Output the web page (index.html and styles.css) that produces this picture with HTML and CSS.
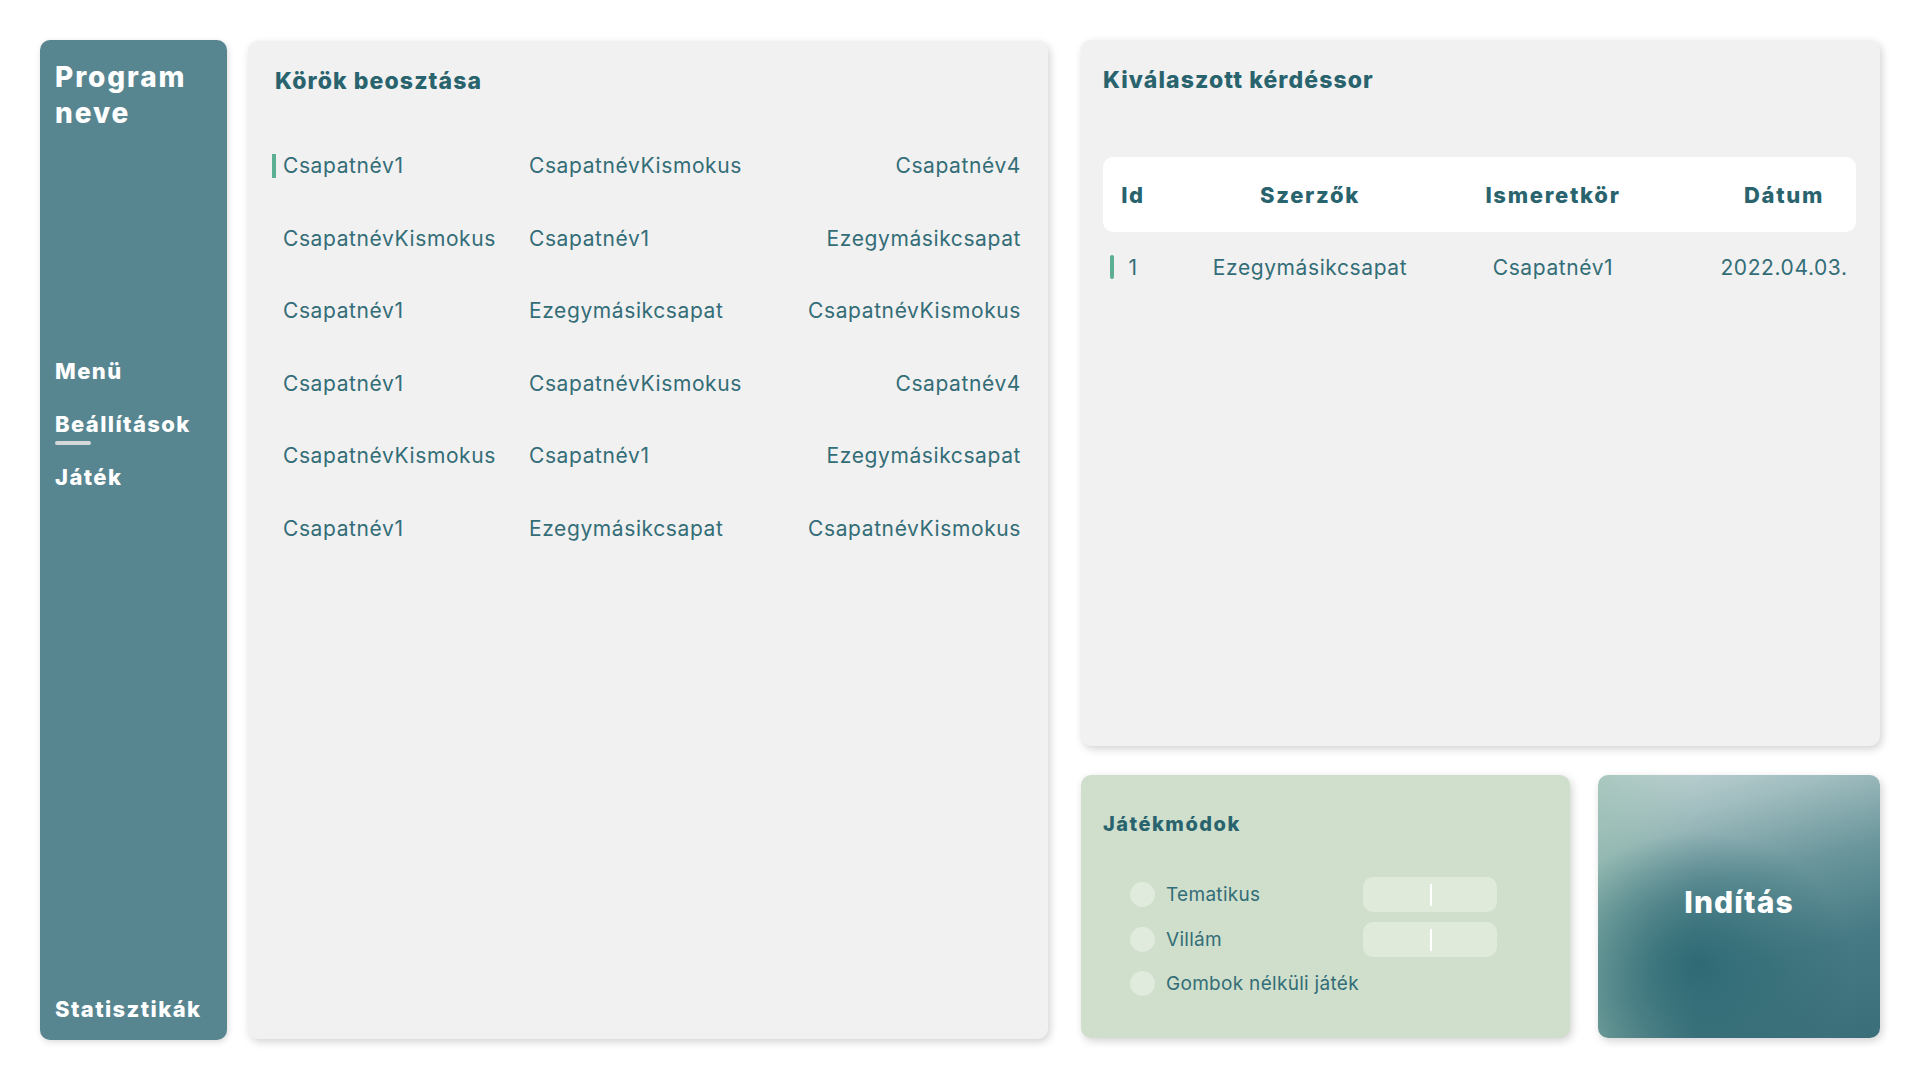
FILE: index.html
```html
<!DOCTYPE html>
<html lang="hu">
<head>
<meta charset="utf-8">
<title>Program neve</title>
<link rel="stylesheet" href="styles.css">
</head>
<body>
<div class="page">
  <aside class="sidebar">
    <div class="brand">Program<br>neve</div>
    <nav class="nav">
      <a class="nav-item">Menü</a>
      <a class="nav-item active">Beállítások</a>
      <a class="nav-item">Játék</a>
    </nav>
    <a class="nav-item stats">Statisztikák</a>
  </aside>

  <section class="panel rounds">
    <h2 class="panel-title">Körök beosztása</h2>
    <div class="round-grid">
      <div class="c1 sel">Csapatnév1</div><div class="c2">CsapatnévKismokus</div><div class="c3">Csapatnév4</div>
      <div class="c1">CsapatnévKismokus</div><div class="c2">Csapatnév1</div><div class="c3">Ezegymásikcsapat</div>
      <div class="c1">Csapatnév1</div><div class="c2">Ezegymásikcsapat</div><div class="c3">CsapatnévKismokus</div>
      <div class="c1">Csapatnév1</div><div class="c2">CsapatnévKismokus</div><div class="c3">Csapatnév4</div>
      <div class="c1">CsapatnévKismokus</div><div class="c2">Csapatnév1</div><div class="c3">Ezegymásikcsapat</div>
      <div class="c1">Csapatnév1</div><div class="c2">Ezegymásikcsapat</div><div class="c3">CsapatnévKismokus</div>
    </div>
  </section>

  <div class="right-col">
    <section class="panel questions">
      <h2 class="panel-title">Kiválaszott kérdéssor</h2>
      <div class="table">
        <div class="thead trow">
          <div class="td">Id</div><div class="td">Szerzők</div><div class="td">Ismeretkör</div><div class="td date">Dátum</div>
        </div>
        <div class="tbody trow">
          <div class="td id"><span class="bar"></span>1</div><div class="td">Ezegymásikcsapat</div><div class="td">Csapatnév1</div><div class="td date">2022.04.03.</div>
        </div>
      </div>
    </section>

    <div class="bottom-row">
      <section class="modes">
        <h3 class="modes-title">Játékmódok</h3>
        <div class="options">
          <div class="opt"><span class="radio"></span><span class="lbl">Tematikus</span><span class="field"><span class="caret"></span></span></div>
          <div class="opt"><span class="radio"></span><span class="lbl">Villám</span><span class="field"><span class="caret"></span></span></div>
          <div class="opt"><span class="radio"></span><span class="lbl">Gombok nélküli játék</span></div>
        </div>
      </section>
      <button class="start">Indítás</button>
    </div>
  </div>
</div>
</body>
</html>
```
FILE: styles.css
```css
* { box-sizing: border-box; }
html, body { margin: 0; padding: 0; background: #ffffff; }
body {
  font-family: Inter, "Noto Sans", "DejaVu Sans", sans-serif;
  color: #2d6871;
}
.page {
  display: flex;
  padding: 40px;
  height: 1080px;
}
.sidebar {
  width: 187px;
  height: 1000px;
  background: #578691;
  border-radius: 10px;
  box-shadow: 1px 2px 6px rgba(0,0,0,0.15);
  padding: 19px 10px 17px 15px;
  display: flex;
  flex-direction: column;
  color: #fff;
}
.brand {
  font-size: 28px;
  font-weight: 800;
  line-height: 36px;
  letter-spacing: 1.9px;
}
.nav {
  margin-top: 226px;
  display: flex;
  flex-direction: column;
  gap: 25px;
}
.nav-item {
  font-size: 22px;
  font-weight: 800;
  line-height: 28px;
  color: #fff;
  letter-spacing: 1.4px;
  white-space: nowrap;
}
.nav-item.active { position: relative; }
.nav-item.active::after {
  content: "";
  position: absolute;
  left: 0;
  top: 31px;
  width: 36px;
  height: 4px;
  border-radius: 2px;
  background: #d4d8d9;
}
.stats { margin-top: auto; }

.panel {
  background: #f1f1f1;
  border-radius: 10px;
  box-shadow: 2px 3px 8px rgba(0,0,0,0.18);
}
.rounds {
  width: 800px;
  margin-left: 21px;
  height: 998px;
  margin-top: 1px;
  padding: 25px 27px 0 24px;
}
.panel-title {
  margin: 0;
  font-size: 23px;
  font-weight: 800;
  line-height: 30px;
  letter-spacing: 1.1px;
  color: #29646e;
  padding-left: 3px;
}
.round-grid {
  margin-top: 58px;
  display: grid;
  grid-template-columns: 257px 1fr auto;
  row-gap: 48.6px;
  font-size: 21px;
  letter-spacing: 0.6px;
  line-height: 24px;
  color: #336d77;
}
.c1 { padding-left: 11px; }
.c1.sel { border-left: 4px solid #5caf92; padding-left: 7px; }
.c3 { justify-self: end; }

.right-col {
  margin-left: 33px;
  flex: 1;
  display: flex;
  flex-direction: column;
  gap: 29px;
}
.questions {
  height: 706px;
  padding: 25px 24px 0 22px;
}
.questions .panel-title { padding-left: 0; }
.table { margin-top: 62px; }
.trow {
  display: grid;
  grid-template-columns: 60px 294px 192px 1fr;
  align-items: center;
}
.thead {
  background: #ffffff;
  border-radius: 10px;
  height: 75px;
  font-size: 22px;
  font-weight: 800;
  letter-spacing: 1.7px;
  color: #29646e;
}
.td { text-align: center; }
.td.date { padding-left: 63px; }
.tbody {
  height: 70px;
  font-size: 21px;
  letter-spacing: 0.6px;
  color: #336d77;
}
.td.id { position: relative; }
.bar {
  position: absolute;
  left: 7px;
  top: 50%;
  margin-top: -12px;
  width: 4px;
  height: 24px;
  border-radius: 2px;
  background: #5caf92;
}

.bottom-row {
  display: flex;
  height: 263px;
  gap: 28px;
}
.modes {
  width: 489px;
  background: #cfdfcc;
  border-radius: 10px;
  box-shadow: 2px 3px 8px rgba(0,0,0,0.18);
  padding: 36px 22px 0 22px;
}
.modes-title {
  margin: 0;
  font-size: 20px;
  font-weight: 800;
  line-height: 26px;
  letter-spacing: 1.5px;
  color: #29646e;
}
.options {
  margin-top: 40px;
  padding-left: 27px;
  display: flex;
  flex-direction: column;
  gap: 9.5px;
}
.opt {
  display: flex;
  align-items: center;
  height: 35px;
}
.radio {
  width: 25px;
  height: 25px;
  border-radius: 50%;
  background: #e0ebdd;
  flex: none;
}
.lbl {
  margin-left: 11px;
  width: 197px;
  font-size: 19px;
  letter-spacing: 0.3px;
  color: #336d77;
  white-space: nowrap;
}
.field {
  width: 134px;
  height: 35px;
  border-radius: 10px;
  background: #dfeadb;
  position: relative;
}
.caret {
  position: absolute;
  left: 67px;
  top: 7px;
  width: 2px;
  height: 22px;
  background: #ffffff;
}
.start {
  flex: 1;
  border: none;
  border-radius: 10px;
  box-shadow: 2px 3px 8px rgba(0,0,0,0.18);
  font-family: inherit;
  font-size: 30px;
  font-weight: 800;
  letter-spacing: 1.1px;
  color: #ffffff;
  padding: 0 0 10px 0;
  background:
    radial-gradient(ellipse 55% 50% at 35% 72%, rgba(46,106,116,0.95) 0%, rgba(46,106,116,0) 100%),
    linear-gradient(to right, rgba(150,190,175,0.6) 0%, rgba(150,190,175,0) 35%),
    linear-gradient(165deg, #c5d6d7 0%, #a2bec0 18%, #6a969c 42%, #467a84 68%, #3a6e78 100%);
  cursor: pointer;
}
```
